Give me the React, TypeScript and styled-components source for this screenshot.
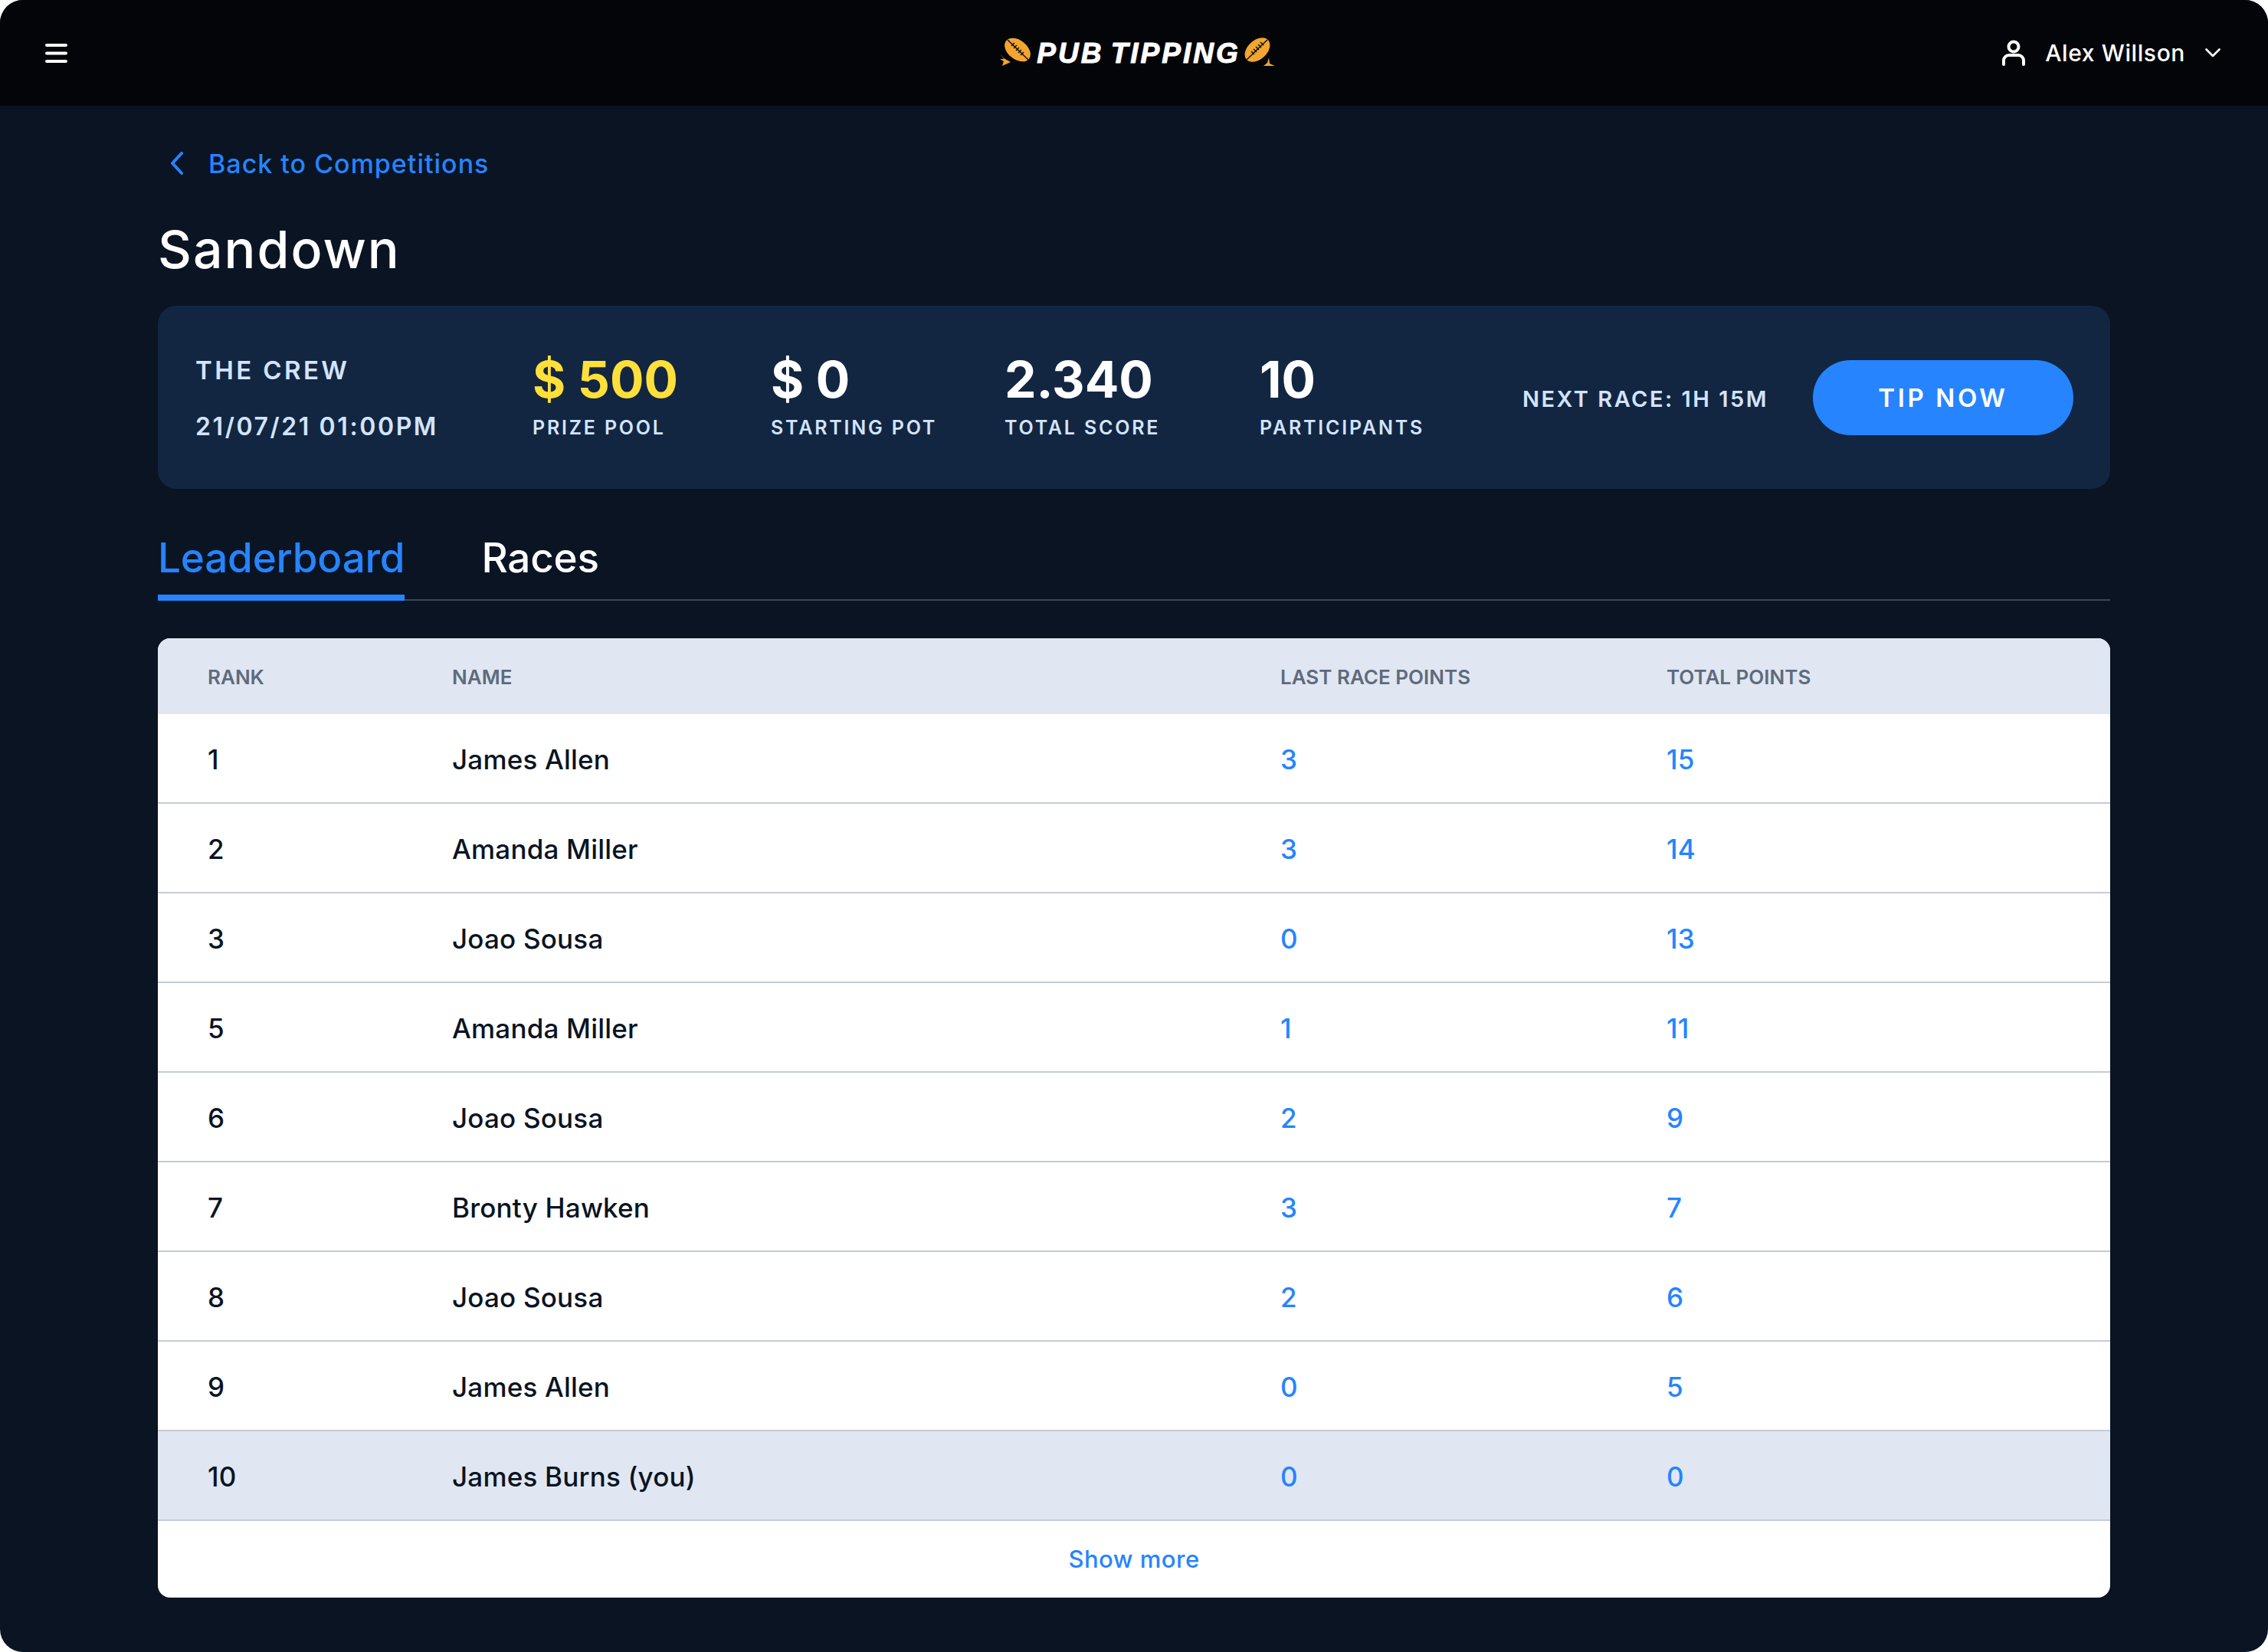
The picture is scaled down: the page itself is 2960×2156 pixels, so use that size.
import styled, { createGlobalStyle } from "styled-components";

const GlobalStyle = createGlobalStyle`
  html, body {
    margin: 0;
    padding: 0;
    background: #fff;
  }
  * {
    box-sizing: border-box;
  }
`;

const Page = styled.div`
  width: 2960px;
  height: 2156px;
  border-radius: 30px;
  overflow: hidden;
  background: #0a1423;
  font-family: Inter, "Noto Sans", sans-serif;
  color: #fff;
`;

const Header = styled.header`
  height: 138px;
  background: #040508;
  display: grid;
  grid-template-columns: 1fr auto 1fr;
  align-items: center;
  padding: 0 62px 0 59px;
`;

const MenuButton = styled.div`
  display: flex;
  align-items: center;
`;

const Logo = styled.div`
  display: flex;
  align-items: center;
  margin-left: 12px;
`;

const LogoText = styled.span`
  font-family: "Liberation Sans", Arial, sans-serif;
  font-weight: 700;
  font-style: italic;
  font-size: 37px;
  line-height: 40px;
  letter-spacing: 3px;
  word-spacing: -4px;
  margin: 2px 5px 0 8px;
  white-space: nowrap;
  -webkit-text-stroke: 1px #fff;
`;

const UserMenu = styled.div`
  display: flex;
  align-items: center;
  justify-content: flex-end;
  font-size: 30px;
  font-weight: 500;
`;

const UserName = styled.span`
  margin: 0 26px;
  letter-spacing: 0.6px;
`;

const Main = styled.main`
  padding: 0 206px;
`;

const BackLink = styled.a`
  display: flex;
  align-items: center;
  height: 40px;
  margin-top: 55px;
  padding-left: 16px;
  gap: 32px;
  color: #2684ff;
  font-size: 34px;
  font-weight: 500;
  letter-spacing: 1px;
`;

const Title = styled.h1`
  margin: 50px 0 0;
  font-size: 68px;
  line-height: 85px;
  font-weight: 500;
  letter-spacing: 2px;
`;

const StatsCard = styled.section`
  margin-top: 31px;
  height: 239px;
  border-radius: 24px;
  background: #122641;
  display: grid;
  grid-template-columns: 440px 311px 305px 333px 343px 379px 340px;
  align-items: center;
  padding: 0 48px 0 49px;
`;

const CrewBlock = styled.div`
  display: flex;
  flex-direction: column;
  gap: 38px;
  color: #d3e4ff;
  font-weight: 600;
  margin-top: 2px;
`;

const CrewName = styled.span`
  font-size: 33px;
  line-height: 36px;
  letter-spacing: 3.4px;
`;

const CrewDate = styled.span`
  font-size: 32px;
  line-height: 36px;
  letter-spacing: 2.6px;
`;

const Stat = styled.div`
  display: flex;
  flex-direction: column;
  margin-bottom: 4px;
`;

const StatValue = styled.span<{ $gold?: boolean }>`
  font-size: 66px;
  line-height: 70px;
  font-weight: 700;
  color: ${(props) => (props.$gold ? "#ffe03a" : "#fff")};
`;

const StatLabel = styled.span`
  margin-top: 13px;
  font-size: 25px;
  line-height: 30px;
  font-weight: 600;
  letter-spacing: 2.8px;
  color: #d3e4ff;
`;

const NextRace = styled.div`
  padding-top: 3px;
  font-size: 29px;
  font-weight: 600;
  letter-spacing: 2.5px;
  color: #d3e4ff;
  white-space: nowrap;
`;

const TipButton = styled.button`
  width: 340px;
  height: 98px;
  border: 0;
  border-radius: 49px;
  background: #2684ff;
  color: #fff;
  font-family: inherit;
  font-size: 33px;
  font-weight: 600;
  letter-spacing: 3.6px;
`;

const Tabs = styled.nav`
  margin-top: 42px;
  height: 104px;
  display: flex;
  gap: 100px;
  border-bottom: 2px solid #3e4756;
`;

const Tab = styled.div<{ $active?: boolean }>`
  height: 104px;
  padding-top: 16px;
  font-size: 53px;
  line-height: 64px;
  font-weight: 500;
  letter-spacing: -0.2px;
  color: ${(props) => (props.$active ? "#2684ff" : "#fff")};
  border-bottom: ${(props) => (props.$active ? "8px solid #2684ff" : "0")};
`;

const Table = styled.section`
  margin-top: 49px;
  height: 1252px;
  background: #fff;
  border-radius: 16px;
  overflow: hidden;
`;

const columns = "319px 1081px 504px 1fr";

const HeadRow = styled.div`
  height: 99px;
  display: grid;
  grid-template-columns: ${columns};
  align-items: center;
  padding-left: 65px;
  padding-top: 2px;
  background: #e0e7f2;
  color: #5f6b7c;
  font-size: 26px;
  font-weight: 600;
`;

const Row = styled.div<{ $you?: boolean }>`
  height: 117px;
  display: grid;
  grid-template-columns: ${columns};
  align-items: center;
  padding-left: 65px;
  padding-top: 2px;
  background: ${(props) => (props.$you ? "#e0e7f2" : "#fff")};
  border-bottom: 2px solid #c3ccd6;
  color: #0a1423;
  font-size: 35px;
  font-weight: 500;
  letter-spacing: 0.2px;
`;

const Points = styled.span`
  color: #2684ff;
`;

const ShowMore = styled.div`
  height: 99px;
  display: flex;
  align-items: center;
  justify-content: center;
  color: #2684ff;
  font-size: 31px;
  font-weight: 500;
  letter-spacing: 0.5px;
`;

const rows = [
  ["1", "James Allen", "3", "15"],
  ["2", "Amanda Miller", "3", "14"],
  ["3", "Joao Sousa", "0", "13"],
  ["5", "Amanda Miller", "1", "11"],
  ["6", "Joao Sousa", "2", "9"],
  ["7", "Bronty Hawken", "3", "7"],
  ["8", "Joao Sousa", "2", "6"],
  ["9", "James Allen", "0", "5"],
  ["10", "James Burns (you)", "0", "0"],
];

const stats = [
  { value: "$ 500", label: "PRIZE POOL", gold: true },
  { value: "$ 0", label: "STARTING POT" },
  { value: "2.340", label: "TOTAL SCORE" },
  { value: "10", label: "PARTICIPANTS" },
];

const LeftBall = () => (
  <svg width="40" height="42" viewBox="0 0 40 42">
    <ellipse cx="23" cy="17" rx="19" ry="12.5" transform="rotate(38 23 17)" fill="#f2a531" />
    <path d="M10 4 L37 30" stroke="#15120a" strokeWidth="1.6" />
    <path d="M15 12l4-4M18 15l4-4M21 18l4-4M24 21l4-4M27 24l4-4" stroke="#15120a" strokeWidth="1.6" />
    <path d="M0 22 L5 28 L14 33 L3 38 L5 32 L0 29 L5 29 Z" fill="#f2a531" />
  </svg>
);

const RightBall = () => (
  <svg width="40" height="42" viewBox="0 0 40 42">
    <ellipse cx="17" cy="17" rx="19" ry="12.5" transform="rotate(-42 17 17)" fill="#f2a531" />
    <path d="M3 30 L30 4" stroke="#15120a" strokeWidth="1.6" />
    <path d="M9 19l4 4M12 16l4 4M15 13l4 4M18 10l4 4M21 7l4 4" stroke="#15120a" strokeWidth="1.6" />
    <path d="M32 27 L30 34 L25 38 L40 38 L33 35 Z" fill="#f2a531" />
  </svg>
);

export default function App() {
  return (
    <Page>
      <GlobalStyle />
      <Header>
        <MenuButton>
          <svg width="29" height="25" viewBox="0 0 29 25" fill="none" stroke="#fff" strokeWidth="4" strokeLinecap="round">
            <path d="M2 2h25M2 12.5h25M2 23h25" />
          </svg>
        </MenuButton>
        <Logo>
          <LeftBall />
          <LogoText>PUB TIPPING</LogoText>
          <RightBall />
        </Logo>
        <UserMenu>
          <svg width="30" height="34" viewBox="0 0 30 34" fill="none" stroke="#fff" strokeWidth="4" strokeLinecap="round">
            <circle cx="15" cy="9" r="6.5" />
            <path d="M2 32v-5a7 7 0 0 1 7-7h12a7 7 0 0 1 7 7v5" />
          </svg>
          <UserName>Alex Willson</UserName>
          <svg width="20" height="12" viewBox="0 0 20 12" fill="none" stroke="#fff" strokeWidth="2.6" strokeLinecap="round" strokeLinejoin="round">
            <path d="M1.5 1.5 10 10l8.5-8.5" />
          </svg>
        </UserMenu>
      </Header>
      <Main>
        <BackLink>
          <svg width="18" height="30" viewBox="0 0 18 30" fill="none" stroke="#2684ff" strokeWidth="4" strokeLinecap="round" strokeLinejoin="round">
            <path d="M15 2 3 15l12 13" />
          </svg>
          Back to Competitions
        </BackLink>
        <Title>Sandown</Title>
        <StatsCard>
          <CrewBlock>
            <CrewName>THE CREW</CrewName>
            <CrewDate>21/07/21 01:00PM</CrewDate>
          </CrewBlock>
          {stats.map((stat) => (
            <Stat key={stat.label}>
              <StatValue $gold={stat.gold}>{stat.value}</StatValue>
              <StatLabel>{stat.label}</StatLabel>
            </Stat>
          ))}
          <NextRace>NEXT RACE: 1H 15M</NextRace>
          <TipButton>TIP NOW</TipButton>
        </StatsCard>
        <Tabs>
          <Tab $active>Leaderboard</Tab>
          <Tab>Races</Tab>
        </Tabs>
        <Table>
          <HeadRow>
            <span>RANK</span>
            <span>NAME</span>
            <span>LAST RACE POINTS</span>
            <span>TOTAL POINTS</span>
          </HeadRow>
          {rows.map((row) => (
            <Row key={row[0]} $you={row[0] === "10"}>
              <span>{row[0]}</span>
              <span>{row[1]}</span>
              <Points>{row[2]}</Points>
              <Points>{row[3]}</Points>
            </Row>
          ))}
          <ShowMore>Show more</ShowMore>
        </Table>
      </Main>
    </Page>
  );
}
